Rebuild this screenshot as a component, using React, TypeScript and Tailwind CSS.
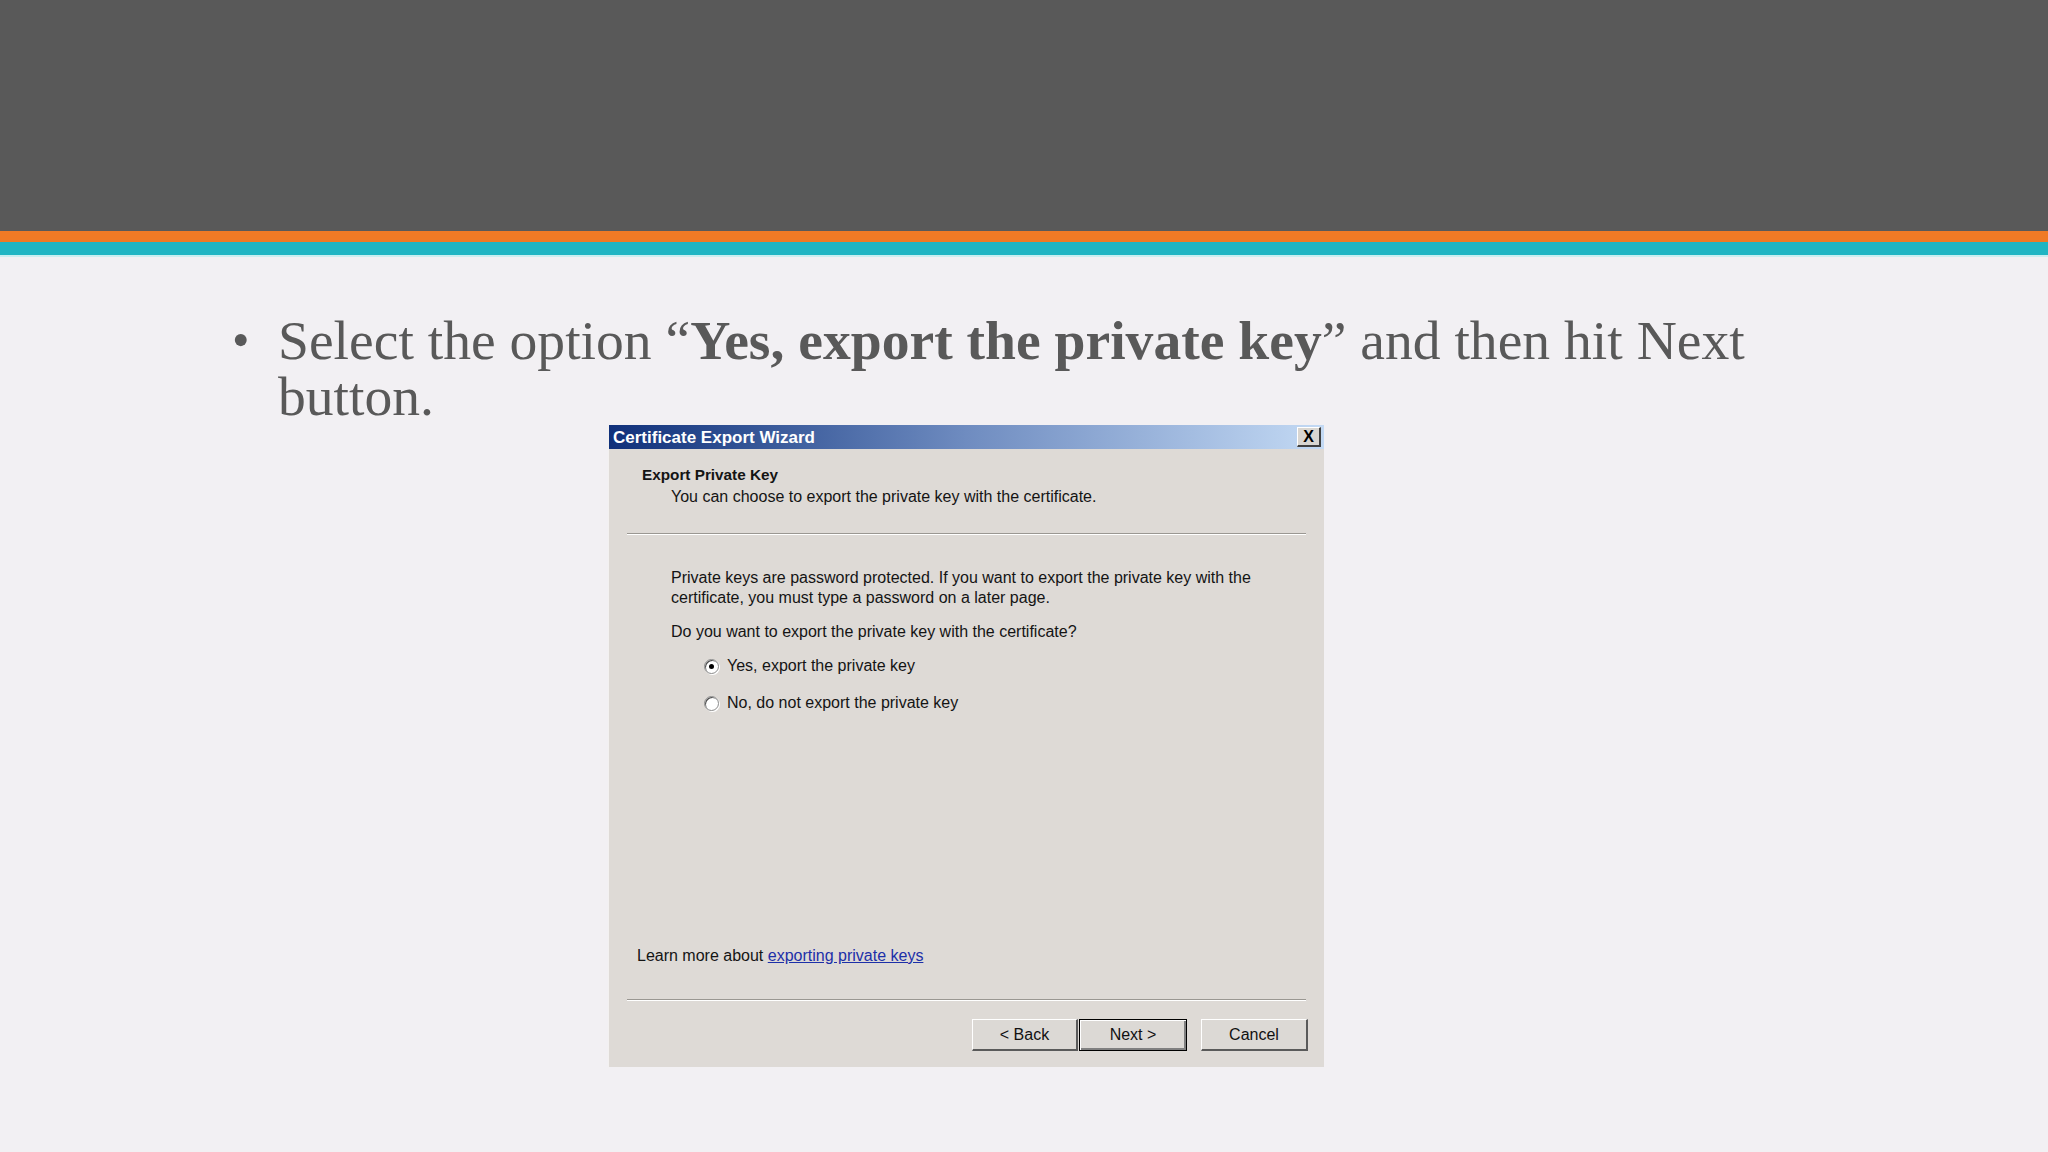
import React from "react";

const ui = { fontFamily: '"Liberation Sans", Arial, sans-serif' };
const serif = { fontFamily: '"Liberation Serif", "Times New Roman", serif' };

function Radio({ checked }: { checked?: boolean }) {
  return (
    <span className="relative inline-block w-[15px] h-[15px] rounded-full bg-white border border-[#8a8a8a] shadow-[inset_1px_1px_0_#505050,1px_1px_0_#ffffff]">
      {checked && (
        <span className="absolute left-[4px] top-[4px] w-[5px] h-[5px] rounded-full bg-black" />
      )}
    </span>
  );
}

function Btn({ label, def }: { label: string; def?: boolean }) {
  return (
    <div
      className={
        "h-[32px] flex items-center justify-center bg-[#dcd9d5] text-[16px] text-[#111] " +
        (def
          ? "border border-black shadow-[inset_1px_1px_0_#ffffff,inset_-2px_-2px_0_#808080]"
          : "border-t border-l border-t-white border-l-white border-b-2 border-r-2 border-b-[#5a5a5a] border-r-[#5a5a5a]")
      }
    >
      {label}
    </div>
  );
}

export default function App() {
  return (
    <div className="w-[2048px] h-[1152px] bg-[#f2f0f3] flex flex-col overflow-hidden">
      <div className="h-[231px] bg-[#595959]" />
      <div className="h-[11px] bg-[#f07a25]" />
      <div className="h-[13px] bg-[#20b5c3]" />
      <div className="h-[2px] bg-[#c9eef0]" />

      <div className="flex pl-[232px] pt-[55px] text-[#595959]" style={serif}>
        <div className="w-[46px] text-[50px] leading-[56px]">•</div>
        <div className="w-[1500px] text-[55.6px] leading-[56px]">
          Select the option “<span className="font-bold">Yes, export the private key</span>” and then hit Next button.
        </div>
      </div>

      <div className="ml-[608px] mt-[1px] w-[716px] h-[642px] bg-[#dedad6] border-l border-[#f3f1f0] flex flex-col text-[#141414]" style={ui}>
        <div className="h-[24px] bg-gradient-to-r from-[#10307a] via-[#6f8cc0] to-[#c4daf4] flex items-center justify-between pl-[4px] pr-[3px]">
          <span className="text-white font-bold text-[17px] leading-none">Certificate Export Wizard</span>
          <div className="w-[24px] h-[20px] bg-[#d9d6d1] border-t border-l border-white border-b-2 border-r-2 border-b-[#404040] border-r-[#404040] flex items-center justify-center text-[16px] font-bold leading-none text-black">
            X
          </div>
        </div>

        <div className="pl-[33px] pt-[17px] text-[15.3px] font-bold leading-[18px]">Export Private Key</div>
        <div className="pl-[62px] pt-[4px] text-[16px] leading-[18px]">
          You can choose to export the private key with the certificate.
        </div>

        <div className="mx-[18px] mt-[27px] h-[2px] border-t border-[#9a9792] border-b border-b-white" />

        <div className="pl-[62px] pt-[33px] text-[16px] leading-[20px]">
          <div>Private keys are password protected. If you want to export the private key with the</div>
          <div>certificate, you must type a password on a later page.</div>
          <div className="mt-[14px]">Do you want to export the private key with the certificate?</div>
        </div>

        <div className="pl-[95px] pt-[16px] flex flex-col gap-[21px] text-[16px] leading-[16px]">
          <div className="flex items-center gap-[8px]">
            <Radio checked />
            <span>Yes, export the private key</span>
          </div>
          <div className="flex items-center gap-[8px]">
            <Radio />
            <span>No, do not export the private key</span>
          </div>
        </div>

        <div className="flex-1" />

        <div className="pl-[28px] text-[16px] leading-[18px]">
          Learn more about <span className="text-[#1c2fa8] underline">exporting private keys</span>
        </div>

        <div className="mx-[18px] mt-[34px] h-[2px] border-t border-[#9a9792] border-b border-b-white" />

        <div className="flex justify-end pr-[16px] pt-[18px] pb-[16px]">
          <div className="w-[106px]"><Btn label="< Back" /></div>
          <div className="w-[108px] ml-[1px]"><Btn label="Next >" def /></div>
          <div className="w-[107px] ml-[14px]"><Btn label="Cancel" /></div>
        </div>
      </div>
    </div>
  );
}
